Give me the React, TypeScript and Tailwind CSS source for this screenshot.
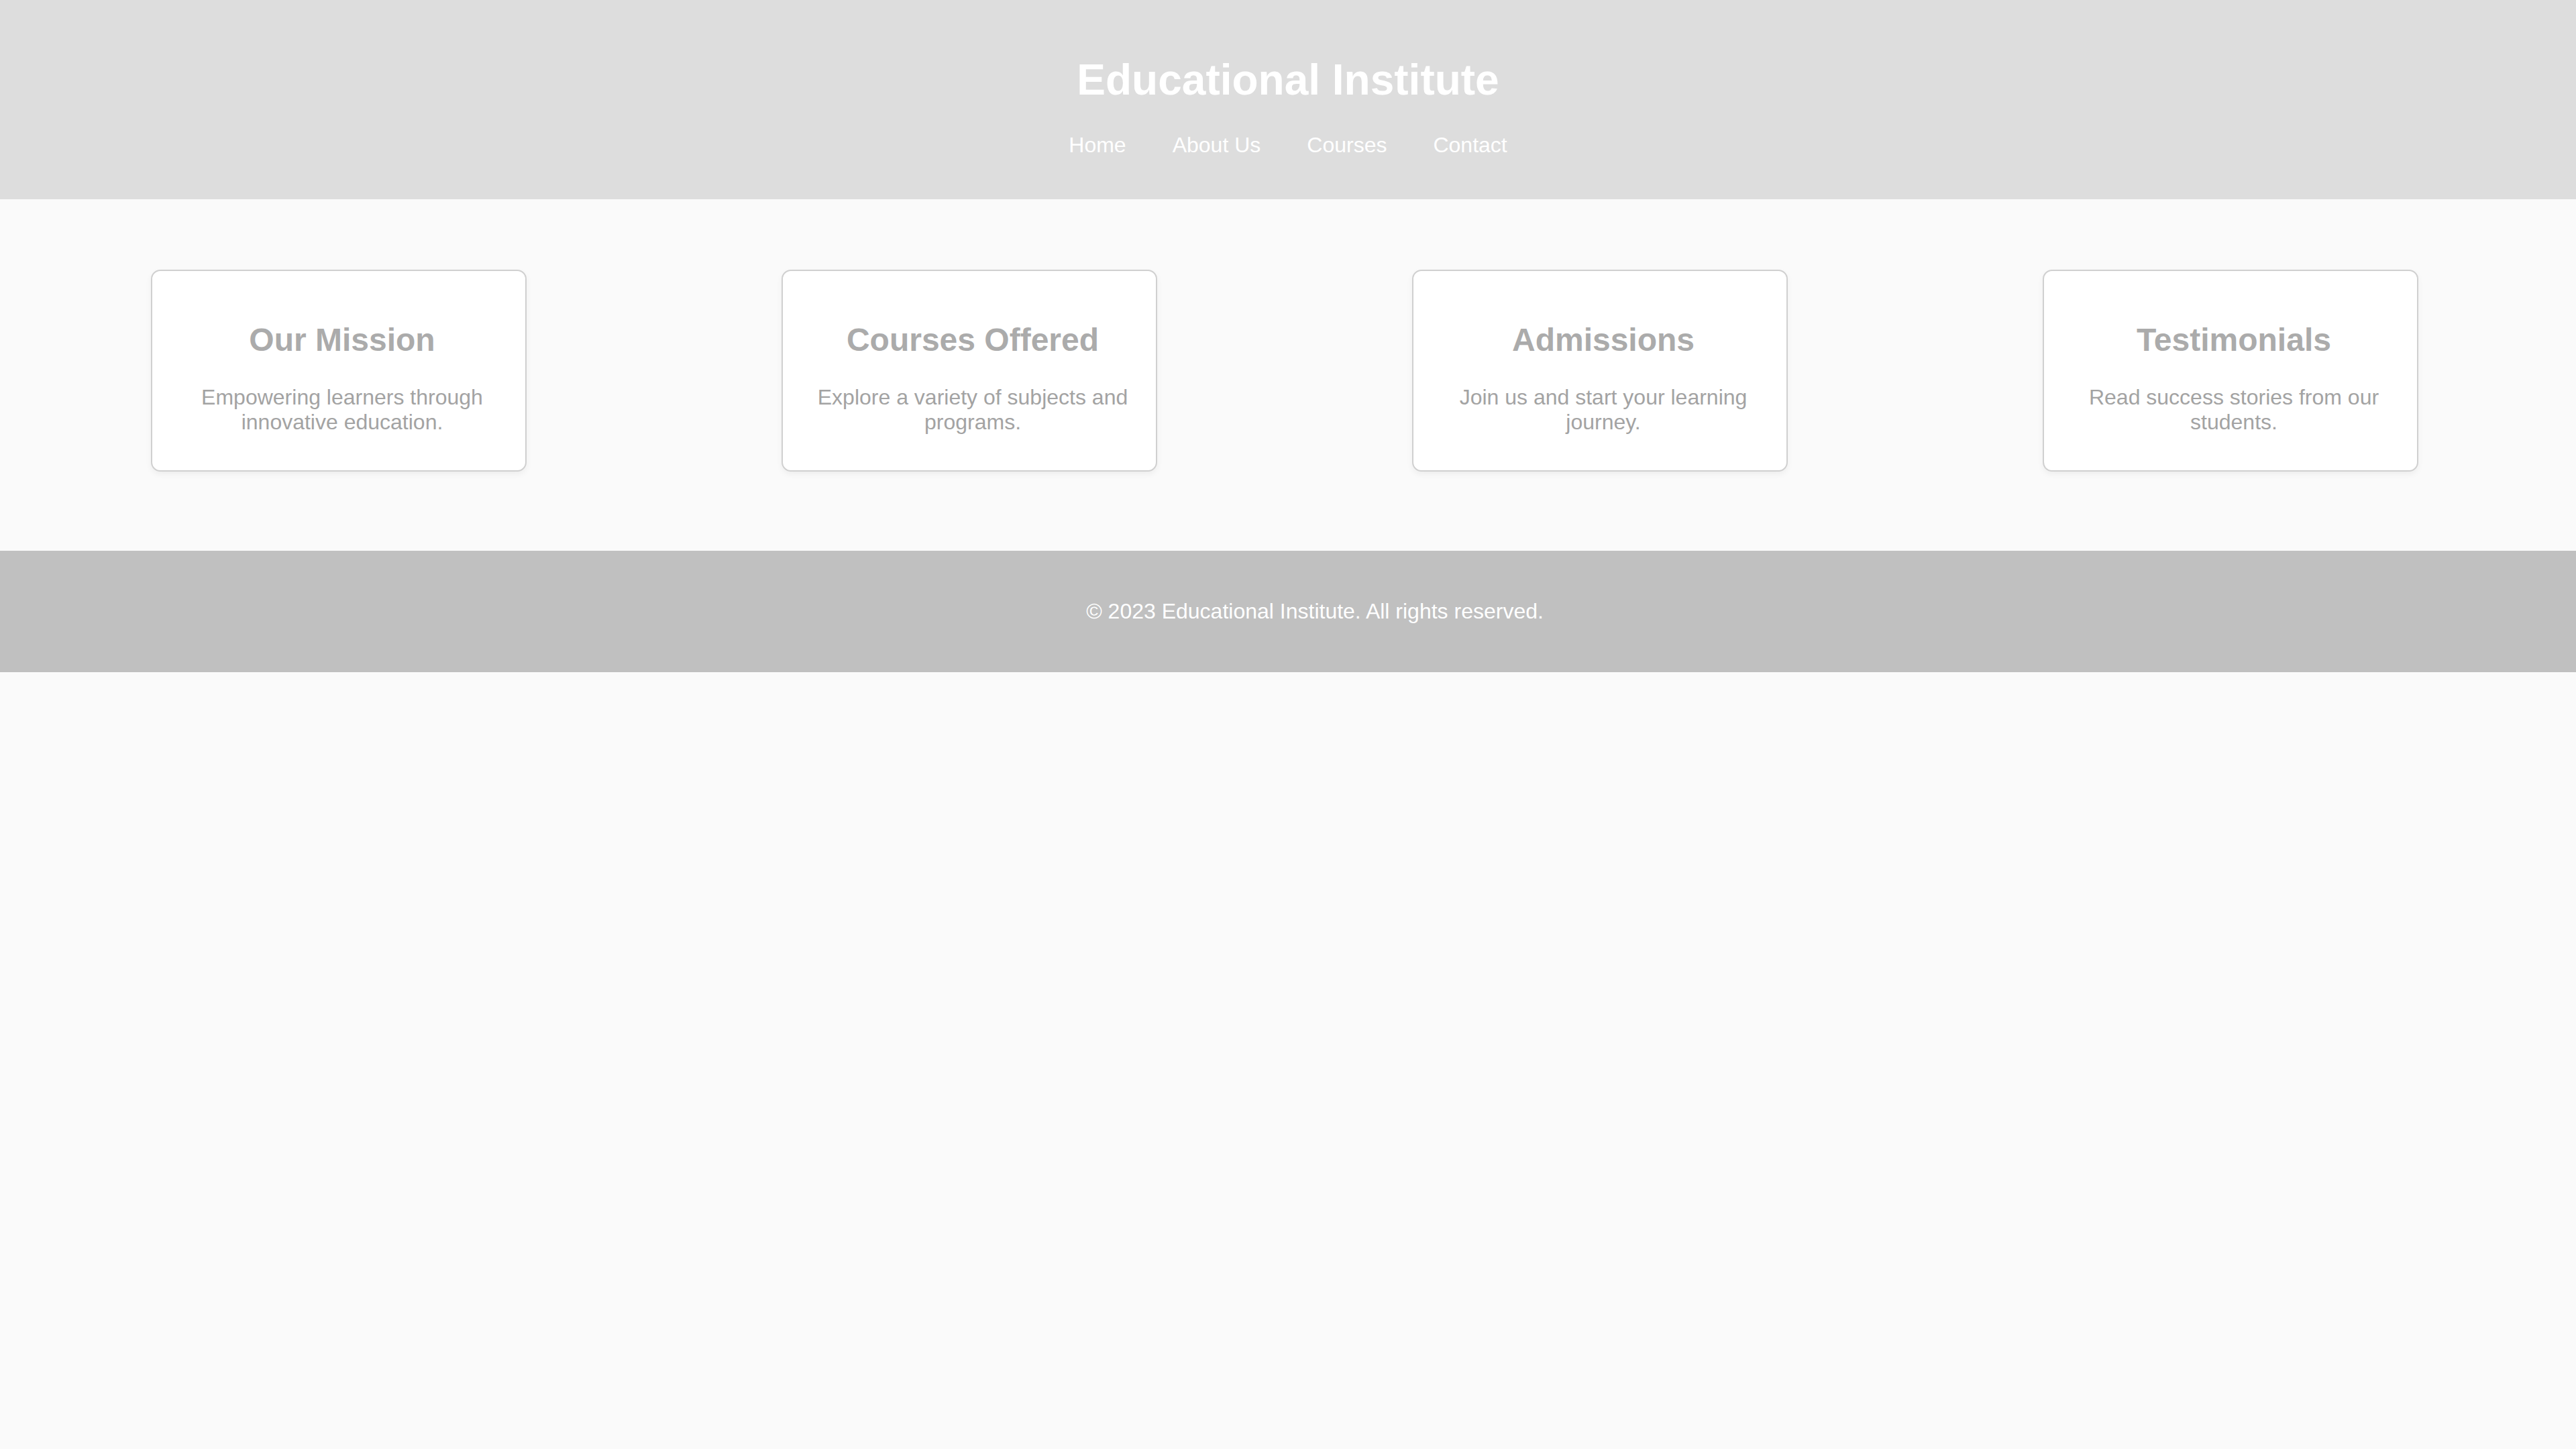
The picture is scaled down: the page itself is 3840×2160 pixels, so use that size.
/* ─── Educational Institute — landing page ─────────────────────────────── */
const links = ["Home", "About Us", "Courses", "Contact"];

const cards = [
    { title: "Our Mission", text: "Empowering learners through innovative education." },
    { title: "Courses Offered", text: "Explore a variety of subjects and programs." },
    { title: "Admissions", text: "Join us and start your learning journey." },
    { title: "Testimonials", text: "Read success stories from our students." },
];

export default function App() {
    return (
        <div className="min-h-screen bg-[#fafafa] font-['Liberation_Sans',Arial,sans-serif]">
            {/* ── Header ───────────────────────────────────────────── */}
            <header className="h-[297px] bg-[#dddddd] flex flex-col items-center pt-[82px]">
                <h1 className="text-[64px] font-bold leading-[74px] text-white">Educational Institute</h1>
                <nav className="mt-[42px]">
                    <ul className="flex gap-[69px] text-[32px] leading-[37px] text-white">
                        {links.map((l) => (
                            <li key={l}>
                                <a href="#">{l}</a>
                            </li>
                        ))}
                    </ul>
                </nav>
            </header>

            {/* ── Cards ────────────────────────────────────────────── */}
            <section className="h-[524px] flex items-start pl-[225px] pt-[105px] gap-[380px]">
                {cards.map((c) => (
                    <div
                        key={c.title}
                        className="w-[560px] h-[301px] shrink-0 bg-white border-2 border-[#d0d0d0] rounded-[14px] shadow-[0_4px_10px_rgba(0,0,0,0.05)] flex flex-col items-center text-center pt-[75px] pl-[45px] pr-[35px]"
                    >
                        <h2 className="text-[48px] font-bold leading-[55px] text-[#ababab]">{c.title}</h2>
                        <p className="mt-[40px] text-[32px] leading-[36.8px] text-[#a3a3a3]">{c.text}</p>
                    </div>
                ))}
            </section>

            {/* ── Footer ───────────────────────────────────────────── */}
            <footer className="h-[181px] bg-[#c0c0c0] flex items-center justify-center pl-[80px]">
                <p className="text-[32px] leading-[37px] text-white">© 2023 Educational Institute. All rights reserved.</p>
            </footer>
        </div>
    );
}
